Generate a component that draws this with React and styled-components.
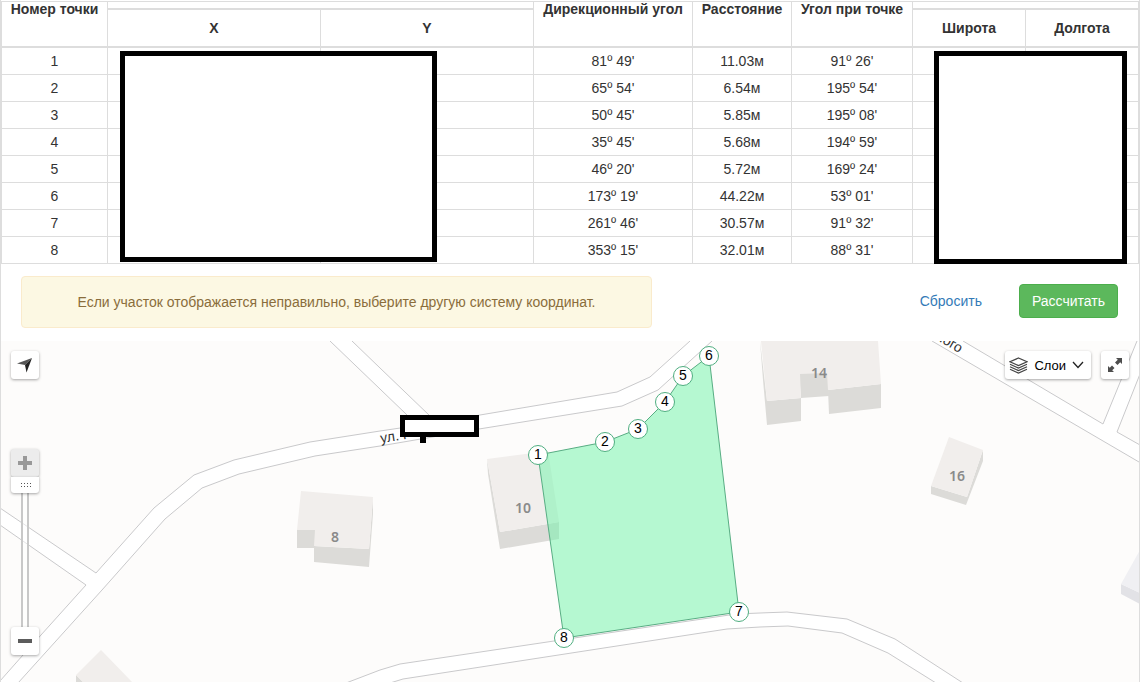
import { useState } from "react";
import styled, { createGlobalStyle } from "styled-components";

const GlobalStyle = createGlobalStyle`
  * {
    box-sizing: border-box;
  }
  body {
    margin: 0;
    background: #fff;
    color: #333;
    font: 14px/20px "Liberation Sans", Arial, sans-serif;
  }
  button {
    font-family: inherit;
    cursor: pointer;
  }
`;

const Page = styled.main`
  display: flex;
  flex-direction: column;
  min-height: 100vh;
  margin-right: 1px;
  padding-top: 1px;
  border: solid #ddd;
  border-width: 0 1px;
`;

const Table = styled.table`
  width: 100%;
  table-layout: fixed;
  border-collapse: separate;
  border-spacing: 0;
  border: solid #ddd;
  border-width: 1px 0 0 1px;
  text-align: center;
`;
const Col = styled.col`
  width: ${({ $width }) => $width}px;
`;
const HeadCell = styled.th`
  height: ${({ $height }) => $height}px;
  padding: 0;
  border: solid #ddd;
  border-width: 0 1px 2px 0;
  line-height: 14px;
  vertical-align: ${({ $top }) => ($top ? "top" : "middle")};
`;
const Cell = styled.td`
  position: relative;
  height: 27px;
  padding: 3px;
  border: solid #ddd;
  border-width: 0 1px 1px 0;
`;
const Mask = styled.div`
  position: absolute;
  z-index: 1;
  top: 3px;
  left: ${({ $left }) => $left}px;
  width: ${({ $width }) => $width}px;
  height: ${({ $height }) => $height}px;
  border: 5px solid #000;
  background: #fff;
`;

const ActionBar = styled.div`
  display: flex;
  align-items: center;
  justify-content: space-between;
  padding: 12px 21px 13px 20px;
`;
const Alert = styled.div`
  flex: 0 1 631px;
  padding: 15px;
  border: 1px solid #faebcc;
  border-radius: 4px;
  background: #fcf8e3;
  color: #8a6d3b;
  text-align: center;
`;
const Actions = styled.div`
  display: flex;
  gap: 24px;
  padding-bottom: 2px;
`;
const Button = styled.button`
  padding: 6px 12px;
  border: 1px solid ${({ $primary }) => ($primary ? "#4cae4c" : "transparent")};
  border-radius: 4px;
  background: ${({ $primary }) => ($primary ? "#5cb85c" : "none")};
  color: ${({ $primary }) => ($primary ? "#fff" : "#337ab7")};
  font-size: 14px;
  line-height: 20px;
`;

const MapBox = styled.section`
  position: relative;
  flex: 1;
  display: flex;
  justify-content: space-between;
  align-items: flex-start;
  min-height: 341px;
  padding: 10px;
  overflow: hidden;
  background: #fdfcfb;
`;
const Canvas = styled.svg`
  position: absolute;
  inset: 0;
  width: 100%;
  height: 100%;
`;
const Controls = styled.div`
  position: relative;
  display: flex;
  flex-direction: ${({ $column }) => ($column ? "column" : "row")};
  gap: ${({ $gap }) => $gap}px;
`;
const MapButton = styled.button`
  display: flex;
  align-items: center;
  justify-content: center;
  gap: 6px;
  min-width: 28px;
  height: 28px;
  padding: ${({ $wide }) => ($wide ? "0 7px 0 4px" : "0")};
  border: 0;
  border-radius: 3px;
  background: #fff;
  box-shadow: 0 1px 3px rgba(0, 0, 0, 0.35);
  color: #000;
  font-size: 13px;
  &:disabled {
    background: #ececec;
    color: #999;
    cursor: default;
  }
`;
const Zoom = styled.div`
  display: flex;
  flex-direction: column;
  align-items: center;
`;
const ZoomRange = styled.input`
  appearance: none;
  writing-mode: vertical-lr;
  direction: rtl;
  width: 28px;
  height: 150px;
  margin: 0;
  background: none;
  &::-webkit-slider-runnable-track {
    width: 8px;
    height: 150px;
    border: solid #c8c8c8;
    border-width: 0 2px;
    background: rgba(255, 255, 255, 0.5);
  }
  &::-webkit-slider-thumb {
    appearance: none;
    width: 28px;
    height: 16px;
    margin-left: -12px;
    border-radius: 0 0 3px 3px;
    background:
      repeating-linear-gradient(90deg, #555 0 1px, #fff 1px 3px) 10px 6px / 10px 1px no-repeat,
      repeating-linear-gradient(90deg, #555 0 1px, #fff 1px 3px) 10px 9px / 10px 1px no-repeat,
      #fff;
    box-shadow: 0 1px 3px rgba(0, 0, 0, 0.35);
  }
`;

const Road = styled.path`
  fill: #fff;
  stroke: none;
`;
const RoadEdge = styled.path`
  fill: none;
  stroke: #c9c9cb;
`;
const Roof = styled.polygon`
  fill: ${({ $cold }) => ($cold ? "#f0f0f3" : "#f1eeec")};
`;
const Wall = styled.polygon`
  fill: ${({ $cold }) => ($cold ? "#e2e2e6" : "#dcdbd8")};
`;
const HouseNumber = styled.text`
  fill: #8a8a8a;
  font: 600 14px "Noto Sans", "Open Sans", sans-serif;
  text-anchor: middle;
`;
const StreetName = styled.text`
  fill: #333;
  font-size: 14px;
`;
const Plot = styled.polygon`
  fill: rgba(109, 244, 168, 0.5);
  stroke: #58ad83;
`;
const Pin = styled.g`
  circle {
    fill: #fff;
    stroke: #4fae80;
  }
  text {
    fill: #000;
    font-size: 14px;
    text-anchor: middle;
  }
`;

const columns = [106, 213, 213, 159, 99, 121, 113, 113];

const rows = [
  ["81º 49'", "11.03м", "91º 26'"],
  ["65º 54'", "6.54м", "195º 54'"],
  ["50º 45'", "5.85м", "195º 08'"],
  ["35º 45'", "5.68м", "194º 59'"],
  ["46º 20'", "5.72м", "169º 24'"],
  ["173º 19'", "44.22м", "53º 01'"],
  ["261º 46'", "30.57м", "91º 32'"],
  ["353º 15'", "32.01м", "88º 31'"],
];

const points = [
  [538, 455],
  [605, 442],
  [638, 429],
  [665, 402],
  [683, 376],
  [709, 356],
  [739, 612],
  [564, 638],
];

const roads = [
  "M0 681L23 655 86 585 96 573 154 508 194 475 234 460 310 442 380 431 480 415 617 392 650 377 690 341H712L658 390 622 406 479 429 380 446 315 456 239 474 202 488 165 519 102 590 18 683H0Z",
  "M0 508L96 573 86 585 0 525Z",
  "M330 341L380 389 407 416 411 426 430 422 430 415 380 368 352 341Z",
  "M346 683L380 670 400 664 554 641 736 614 760 613 787 612 847 619 895 639 963 683H936L888 653 842 633 788 626 760 627 727 629 403 679 390 683Z",
  "M932 341L1139 462V445L1117 432 1139 376V341H1137L1103 424 963 341Z",
];

const roadEdges = [
  "M0 681L23 655 86 585 0 525",
  "M0 508L96 573 154 508 194 475 234 460 310 442 380 431 407 427V415L380 389 330 341",
  "M352 341L380 368 430 416V423L480 415 617 392 650 377 690 341",
  "M712 341L658 390 622 406 479 429 380 446 315 456 239 474 202 488 165 519 102 590 18 683",
  "M346 683L380 670 400 664 554 641 736 614 760 613 787 612 847 619 895 639 963 683",
  "M390 683L403 679 727 629 760 627 788 626 842 633 888 653 936 683",
  "M932 341L1139 462M963 341L1103 424 1137 341M1140 374L1117 432 1140 445",
];

const walls = [
  "297,530 315,530 315,548 297,548",
  "314,546 369,549 373,497 373,514 369,567 314,562",
  "487,459 500,532 559,522 559,539 500,549 488,474",
  "760,341 767,401 801,398 801,421 767,425 763,380",
  "799,372 828,371 829,396 801,398",
  "828,390 881,384 881,408 829,414",
  "931,486 967,497 983,450 983,461 966,505 931,494",
  "76,675 84,683 76,683",
];

const roofs = [
  "301,491 373,497 369,549 314,546 315,530 297,530",
  "487,459 548,451 559,522 500,532",
  "761,341 878,341 881,384 828,390 827,373 800,374 801,398 767,401",
  "949,437 983,450 967,497 931,486",
  "101,650 76,675 84,683 133,683",
];

const houses = [
  [335, 542, "8"],
  [523, 513, "10"],
  [819, 378, "14"],
  [957, 481, "16"],
];

const PointsTable = () => {
  return (
    <Table>
      <colgroup>
        {columns.map((width, i) => (
          <Col key={i} $width={width} />
        ))}
      </colgroup>
      <thead>
        <tr>
          <HeadCell rowSpan={2} $top>Номер точки</HeadCell>
          <HeadCell colSpan={2} $height={8} />
          <HeadCell rowSpan={2} $top>Дирекционный угол</HeadCell>
          <HeadCell rowSpan={2} $top>Расстояние</HeadCell>
          <HeadCell rowSpan={2} $top>Угол при точке</HeadCell>
          <HeadCell colSpan={2} $height={8} />
        </tr>
        <tr>
          <HeadCell $height={38}>X</HeadCell>
          <HeadCell $height={38}>Y</HeadCell>
          <HeadCell $height={38}>Широта</HeadCell>
          <HeadCell $height={38}>Долгота</HeadCell>
        </tr>
      </thead>
      <tbody>
        {rows.map(([direction, distance, angle], i) => (
          <tr key={i}>
            <Cell>{i + 1}</Cell>
            <Cell>{i === 0 && <Mask $left={12} $width={317} $height={211} />}</Cell>
            <Cell />
            <Cell>{direction}</Cell>
            <Cell>{distance}</Cell>
            <Cell>{angle}</Cell>
            <Cell>{i === 0 && <Mask $left={21} $width={193} $height={213} />}</Cell>
            <Cell />
          </tr>
        ))}
      </tbody>
    </Table>
  );
};

const PlotMap = () => {
  return (
    <Canvas viewBox="1 341 1138 341" preserveAspectRatio="xMidYMid slice">
      {roads.map((d) => (
        <Road key={d} d={d} />
      ))}
      {roadEdges.map((d) => (
        <RoadEdge key={d} d={d} />
      ))}
      {walls.map((p) => (
        <Wall key={p} points={p} />
      ))}
      {roofs.map((p) => (
        <Roof key={p} points={p} />
      ))}
      <Wall $cold points="1121,584 1140,593 1140,604 1121,594" />
      <Roof $cold points="1140,550 1121,584 1140,593" />
      {houses.map(([x, y, number]) => (
        <HouseNumber key={number} x={x} y={y}>{number}</HouseNumber>
      ))}
      <StreetName transform="translate(381 443) rotate(-9)">ул. Г</StreetName>
      <StreetName transform="translate(935 339) rotate(30)">ного</StreetName>
      <rect x="402.5" y="417.5" width="74" height="17" fill="#fff" stroke="#000" strokeWidth="5" />
      <rect x="420" y="436" width="6" height="7" />
      <Plot points={points.join(" ")} />
      {points.map(([x, y], i) => (
        <Pin key={i}>
          <circle cx={x} cy={y} r="9.5" />
          <text x={x} y={y + 4}>{i + 1}</text>
        </Pin>
      ))}
    </Canvas>
  );
};

const App = () => {
  const [zoom, setZoom] = useState(19);

  return (
    <>
      <GlobalStyle />
      <Page>
        <PointsTable />
        <ActionBar>
          <Alert role="alert">
            Если участок отображается неправильно, выберите другую систему координат.
          </Alert>
          <Actions>
            <Button type="button">Сбросить</Button>
            <Button type="button" $primary>Рассчитать</Button>
          </Actions>
        </ActionBar>
        <MapBox>
          <PlotMap />
          <Controls $column $gap={70}>
            <MapButton type="button" aria-label="Моё местоположение">
              <svg width="16" height="16" viewBox="0 0 16 16">
                <path d="M15 1L0 6.500 8 8Z" fill="#555" />
                <path d="M15 1L8 8 9.500 15.500Z" fill="#222" />
              </svg>
            </MapButton>
            <Zoom>
              <MapButton
                type="button"
                aria-label="Приблизить"
                disabled={zoom === 19}
                onClick={() => setZoom(zoom + 1)}
              >
                <svg width="14" height="14">
                  <path d="M5 0h4v5h5v4H9v5H5V9H0V5h5z" fill="currentColor" />
                </svg>
              </MapButton>
              <ZoomRange
                type="range"
                aria-label="Масштаб"
                min="0"
                max="19"
                value={zoom}
                onChange={(e) => setZoom(Number(e.target.value))}
              />
              <MapButton
                type="button"
                aria-label="Отдалить"
                disabled={zoom === 0}
                onClick={() => setZoom(zoom - 1)}
              >
                <svg width="14" height="4">
                  <path d="M0 0h14v4H0z" fill="#5c5c5c" />
                </svg>
              </MapButton>
            </Zoom>
          </Controls>
          <Controls $gap={10}>
            <MapButton type="button" $wide>
              <svg width="19" height="17" fill="none" stroke="#444" strokeWidth="1.200">
                <path d="M9.500 1L18 4.800 9.500 8.600 1 4.800Z" />
                <path d="M1 7.300l8.500 3.800L18 7.300M1 9.800l8.500 3.800L18 9.800M1 12.300l8.500 3.800 8.500-3.800" />
              </svg>
              Слои
              <svg width="12" height="8" fill="none" stroke="#222" strokeWidth="1.300">
                <path d="M1 1l5 5.500L11 1" />
              </svg>
            </MapButton>
            <MapButton type="button" aria-label="На весь экран">
              <svg width="14" height="14" fill="#4d4d4d">
                <path d="M14 0v6l-1.800-1.800L9.500 7 7 4.500 9.800 1.800 8 0z" />
                <path d="M0 14V8l1.800 1.800L4 7.500 6.500 10 4.200 12.200 6 14z" />
              </svg>
            </MapButton>
          </Controls>
        </MapBox>
      </Page>
    </>
  );
};

export default App;
